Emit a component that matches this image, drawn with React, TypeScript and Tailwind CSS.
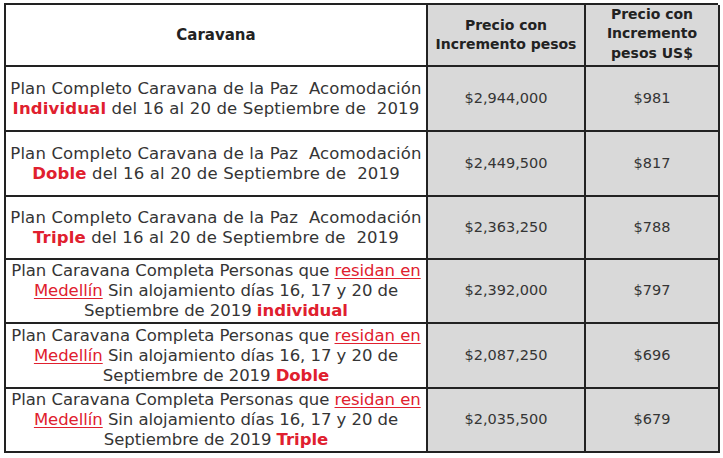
import React from "react";

const red = "text-[#e0202e]";

function Desc({ children, tight }: { children: React.ReactNode; tight?: boolean }) {
  return (
    <div
      className={`flex items-center justify-center border-r-2 border-b-2 border-[#222] bg-white text-center text-[16.5px] leading-[20px] text-[#353535] ${
        tight ? "tracking-[-0.05px]" : "tracking-[0.15px]"
      }`}
    >
      <div className="whitespace-nowrap">{children}</div>
    </div>
  );
}

function Price({ children }: { children: React.ReactNode }) {
  return (
    <div className="flex items-center justify-center border-r-2 border-b-2 border-[#222] bg-[#d9d9d9] text-[14.5px] text-[#353535]">
      {children}
    </div>
  );
}

const Link = ({ children }: { children: React.ReactNode }) => (
  <span className={`${red} underline decoration-[#e0202e] underline-offset-2`}>{children}</span>
);

export default function App() {
  const rows: { desc: React.ReactNode; p: string; u: string; tight?: boolean }[] = [
    {
      desc: (
        <>
          Plan Completo Caravana de la Paz&nbsp; Acomodación
          <br />
          <b className={red}>Individual</b> del 16 al 20 de Septiembre de&nbsp; 2019
        </>
      ),
      p: "$2,944,000",
      u: "$981",
    },
    {
      desc: (
        <>
          Plan Completo Caravana de la Paz&nbsp; Acomodación
          <br />
          <b className={red}>Doble</b> del 16 al 20 de Septiembre de&nbsp; 2019
        </>
      ),
      p: "$2,449,500",
      u: "$817",
    },
    {
      desc: (
        <>
          Plan Completo Caravana de la Paz&nbsp; Acomodación
          <br />
          <b className={red}>Triple</b> del 16 al 20 de Septiembre de&nbsp; 2019
        </>
      ),
      p: "$2,363,250",
      u: "$788",
    },
    {
      desc: (
        <>
          Plan Caravana Completa Personas que <Link>residan en</Link>
          <br />
          <Link>Medellín</Link> Sin alojamiento días 16, 17 y 20 de
          <br />
          Septiembre de 2019 <b className={red}>individual</b>
        </>
      ),
      p: "$2,392,000",
      u: "$797",
      tight: true,
    },
    {
      desc: (
        <>
          Plan Caravana Completa Personas que <Link>residan en</Link>
          <br />
          <Link>Medellín</Link> Sin alojamiento días 16, 17 y 20 de
          <br />
          Septiembre de 2019 <b className={red}>Doble</b>
        </>
      ),
      p: "$2,087,250",
      u: "$696",
      tight: true,
    },
    {
      desc: (
        <>
          Plan Caravana Completa Personas que <Link>residan en</Link>
          <br />
          <Link>Medellín</Link> Sin alojamiento días 16, 17 y 20 de
          <br />
          Septiembre de 2019 <b className={red}>Triple</b>
        </>
      ),
      p: "$2,035,500",
      u: "$679",
      tight: true,
    },
  ];

  return (
    <div
      className="h-[458px] w-[723px] bg-white pl-[4px] pt-[3px]"
      style={{ fontFamily: '"DejaVu Sans", sans-serif' }}
    >
      <div className="grid w-[714px] grid-cols-[422px_158px_134px] grid-rows-[62px_65px_65px_63px_64px_65px_64px] border-t-2 border-l-2 border-[#222]">
        <div className="flex items-center justify-center border-r-2 border-b-2 border-[#222] bg-white text-[15px] font-bold text-[#222]">
          Caravana
        </div>
        <div className="flex items-center justify-center border-r-2 border-b-2 border-[#222] bg-[#d9d9d9] text-center text-[14px] font-bold leading-[19px] text-[#222]">
          Precio con
          <br />
          Incremento pesos
        </div>
        <div className="flex items-center justify-center border-r-2 border-b-2 border-[#222] bg-[#d9d9d9] pb-[2px] text-center text-[14px] font-bold leading-[19.5px] text-[#222]">
          Precio con
          <br />
          Incremento
          <br />
          pesos US$
        </div>
        {rows.map((r, i) => (
          <React.Fragment key={i}>
            <Desc tight={r.tight}>{r.desc}</Desc>
            <Price>{r.p}</Price>
            <Price>{r.u}</Price>
          </React.Fragment>
        ))}
      </div>
    </div>
  );
}
